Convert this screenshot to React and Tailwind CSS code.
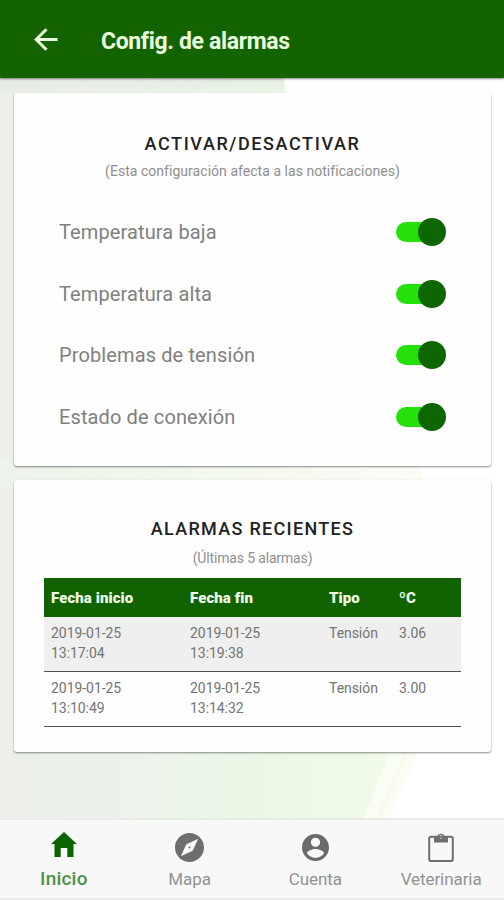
import React, { useState } from "react";

const alarmTypes = [
  { id: "low", label: "Temperatura baja" },
  { id: "high", label: "Temperatura alta" },
  { id: "voltage", label: "Problemas de tensión" },
  { id: "connection", label: "Estado de conexión" },
];

const recentAlarms = [
  { start: ["2019-01-25", "13:17:04"], end: ["2019-01-25", "13:19:38"], type: "Tensión", value: "3.06" },
  { start: ["2019-01-25", "13:10:49"], end: ["2019-01-25", "13:14:32"], type: "Tensión", value: "3.00" },
];

const HomeIcon = () => (
  <svg className="-mt-[5px]" width="26" height="25" viewBox="0 0 26 25" fill="#0a6400">
    <path d="M13 0L26 12h-3.500v13h-6.200v-9h-6.600v9H3.500V12H0z" />
  </svg>
);

const CompassIcon = () => (
  <svg width="29" height="29" viewBox="2 2 20 20" fill="#6e6e6e">
    <path d="M12 11.300a.7.700 0 1 0 0 1.400.7.700 0 0 0 0-1.400zM12 2C6.480 2 2 6.480 2 12s4.480 10 10 10 10-4.480 10-10S17.520 2 12 2zm2.190 12.190L6 18l3.810-8.190L18 6l-3.810 8.190z" />
  </svg>
);

const AccountIcon = () => (
  <svg width="27" height="27" viewBox="2 2 20 20" fill="#6b6b6b">
    <path d="M12 2C6.480 2 2 6.480 2 12s4.480 10 10 10 10-4.480 10-10S17.520 2 12 2zm0 2.700c1.900 0 3.400 1.500 3.400 3.400s-1.500 3.400-3.400 3.400-3.400-1.500-3.400-3.400 1.500-3.400 3.400-3.400zm0 15c-2.600 0-4.900-1.300-6.300-3.400.1-2 4.200-3.200 6.300-3.200s6.200 1.200 6.300 3.200c-1.400 2.100-3.700 3.400-6.300 3.400z" />
  </svg>
);

const ClipboardIcon = () => (
  <svg width="26" height="29" viewBox="0 0 26 29" fill="none">
    <rect x="1.200" y="3.800" width="23.600" height="24.200" rx="1.800" stroke="#6e6e6e" strokeWidth="2" />
    <path
      fillRule="evenodd"
      fill="#6e6e6e"
      d="M6 3.800h3.300a3.750 3.750 0 0 1 7.400 0H20v5.700H6zM13 2a1.800 1.800 0 1 0 0 3.600A1.800 1.800 0 0 0 13 2z"
    />
  </svg>
);

const tabs = [
  { label: "Inicio", icon: HomeIcon, active: true },
  { label: "Mapa", icon: CompassIcon },
  { label: "Cuenta", icon: AccountIcon },
  { label: "Veterinaria", icon: ClipboardIcon },
];

// Pale leaf backdrop behind the cards
const Backdrop = () => (
  <svg className="absolute inset-0 h-full w-full" viewBox="0 0 504 740" preserveAspectRatio="none">
    <defs>
      <linearGradient id="leaf" x1="0" y1="0" x2="1" y2="0">
        <stop offset="0" stopColor="#ebeee9" />
        <stop offset="0.350" stopColor="#ecf3eb" />
        <stop offset="0.600" stopColor="#ebf7e6" />
        <stop offset="1" stopColor="#f2fbe9" />
      </linearGradient>
      <linearGradient id="leafMiddle" x1="0" y1="0" x2="1" y2="0">
        <stop offset="0" stopColor="#edf2ea" />
        <stop offset="0.500" stopColor="#f3f8ee" />
        <stop offset="1" stopColor="#fafcf5" />
      </linearGradient>
      <linearGradient id="shade" x1="0" y1="0" x2="0" y2="1">
        <stop offset="0" stopColor="#dfe5e0" stopOpacity="0.600" />
        <stop offset="1" stopColor="#dfe5e0" stopOpacity="0" />
      </linearGradient>
    </defs>
    <path d="M0 0H284L300 200L422 388L418 674L388 740H0z" fill="url(#leaf)" />
    <rect y="380" width="422" height="30" fill="url(#leafMiddle)" />
    <path d="M390 674h28l-30 66h-25z" fill="#f9fdf3" />
    <path d="M404 674h5l-28 66h-5z" fill="#f6fbee" />
    <rect width="284" height="16" fill="url(#shade)" />
  </svg>
);

const Toggle = ({ checked, onChange, label }) => (
  <button
    type="button"
    role="switch"
    aria-checked={checked}
    aria-label={label}
    onClick={onChange}
    className={`flex h-7 w-[50px] items-center ${checked ? "justify-end" : "justify-start"}`}
  >
    <span className={`h-5 flex-1 rounded-l-full ${checked ? "bg-[#24e10a]" : "bg-gray-300"}`} />
    <span className={`-ml-3 h-7 w-7 rounded-full ${checked ? "bg-[#0d6600]" : "bg-gray-100"}`} />
  </button>
);

const App = () => {
  const [enabled, setEnabled] = useState({ low: true, high: true, voltage: true, connection: true });

  const handleToggle = (id) => {
    setEnabled((prev) => ({ ...prev, [id]: !prev[id] }));
  };

  return (
    <div className="flex h-[900px] w-[504px] flex-col overflow-hidden bg-white font-[Roboto,sans-serif]">
      {/* Header */}
      <header className="z-10 flex h-[78px] shrink-0 items-center bg-[#146301] pt-[4px] pl-[34px] shadow-[0_1px_2px_rgba(0,0,0,0.45)]">
        <button type="button" aria-label="Volver" className="-mt-[3px]">
          <svg width="24" height="23" viewBox="0 0 24 23" fill="none" stroke="#eaffdf" strokeWidth="3">
            <path d="M12.500 1.200L2.200 11.500l10.300 10.300M2.500 11.500H23.500" />
          </svg>
        </button>
        <h1 className="ml-[43px] pt-[2px] text-[23px] font-bold tracking-[-0.350px] text-[#eaffdf]">
          Config. de alarmas
        </h1>
      </header>

      <main className="relative flex-1">
        <Backdrop />
        <div className="relative flex flex-col gap-[14px] pt-[15px] pr-[13px] pl-[14px]">
          {/* Alarm switches */}
          <section className="h-[373px] rounded-[3px] bg-[#fefefe] px-[45px] pt-[39px] shadow-[0_1px_2px_rgba(0,0,0,0.45)]">
            <h2 className="text-center text-[18px] leading-6 font-medium tracking-[1.600px] text-[#222]">
              ACTIVAR/DESACTIVAR
            </h2>
            <p className="mt-[5px] text-center text-sm leading-5 tracking-[0.040px] whitespace-nowrap text-[#8f8f8f]">
              (Esta configuración afecta a las notificaciones)
            </p>
            <div className="mt-5">
              {alarmTypes.map((alarm) => (
                <div key={alarm.id} className="flex h-[61.700px] items-center justify-between">
                  <span className="text-[20px] tracking-[0.120px] text-[#808080]">{alarm.label}</span>
                  <Toggle
                    label={alarm.label}
                    checked={enabled[alarm.id]}
                    onChange={() => handleToggle(alarm.id)}
                  />
                </div>
              ))}
            </div>
          </section>

          {/* Recent alarms */}
          <section className="h-[272px] rounded-[3px] bg-[#fefefe] px-[30px] pt-[37px] shadow-[0_1px_2px_rgba(0,0,0,0.45)]">
            <h2 className="text-center text-[18px] leading-6 font-medium tracking-[1.300px] text-[#222]">
              ALARMAS RECIENTES
            </h2>
            <p className="mt-[7px] text-center text-sm leading-5 tracking-[-0.150px] text-[#8f8f8f]">
              (Últimas 5 alarmas)
            </p>
            <table className="mt-[10px] w-[417px] table-fixed border-collapse text-left">
              <colgroup>
                <col className="w-[139px]" />
                <col className="w-[139px]" />
                <col className="w-[70px]" />
                <col className="w-[69px]" />
              </colgroup>
              <thead>
                <tr className="h-[39px] bg-[#106300] text-[15px] tracking-[0.080px] text-[#efffe9]">
                  <th className="pt-px pl-[7px] font-black">Fecha inicio</th>
                  <th className="pt-px pl-[7px] font-black">Fecha fin</th>
                  <th className="pt-px pl-[7px] font-black">Tipo</th>
                  <th className="pt-px pl-[7px] font-black">ºC</th>
                </tr>
              </thead>
              <tbody>
                {recentAlarms.map((alarm, i) => (
                  <tr
                    key={alarm.start[1]}
                    className={`h-[54.500px] border-b border-[#505050] align-top text-sm leading-[19.500px] tracking-[-0.050px] text-[#747474] ${
                      i % 2 === 0 ? "bg-[#efefef]" : ""
                    }`}
                  >
                    <td className="pt-[7px] pl-[7px]">
                      {alarm.start[0]}
                      <br />
                      {alarm.start[1]}
                    </td>
                    <td className="pt-[7px] pl-[7px]">
                      {alarm.end[0]}
                      <br />
                      {alarm.end[1]}
                    </td>
                    <td className="pt-[7px] pl-[7px]">{alarm.type}</td>
                    <td className="pt-[7px] pl-[7px]">{alarm.value}</td>
                  </tr>
                ))}
              </tbody>
            </table>
          </section>
        </div>
      </main>

      {/* Bottom tabs */}
      <nav className="z-10 grid h-[82px] shrink-0 grid-cols-4 border-t-2 border-b-2 border-t-[#e9ebe8] border-b-[#e9e9e9] bg-[#f8f8f8] pl-px">
        {tabs.map(({ label, icon: Icon, active }) => (
          <a key={label} href="#" className="flex flex-col items-center pt-[11px]">
            <span className="flex h-8 items-center">
              <Icon />
            </span>
            <span
              className={`mt-[4px] leading-6 ${
                active
                  ? "text-[19px] font-medium tracking-[0.200px] text-[#4b9144]"
                  : "text-[17px] tracking-[-0.080px] text-[#929292]"
              }`}
            >
              {label}
            </span>
          </a>
        ))}
      </nav>
    </div>
  );
};

export default App;
